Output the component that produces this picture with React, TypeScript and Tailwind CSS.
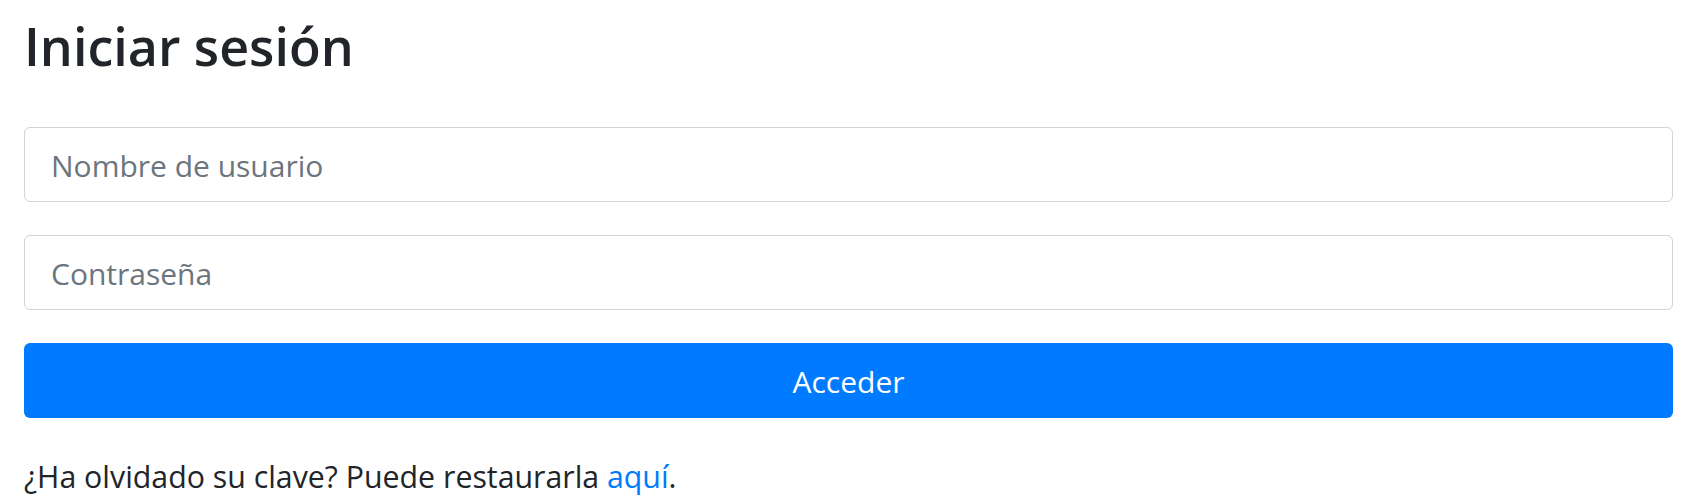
export default function App() {
  return (
    <div className="min-h-screen bg-white pl-[24px] pr-[14px] pt-[11px] font-['Open_Sans',sans-serif] text-[#212529]">
      <h1 className="text-[52px] leading-[70px] font-semibold mb-[46px]">Iniciar sesión</h1>

      <form className="flex flex-col gap-[33px]" onSubmit={(e) => e.preventDefault()}>
        <input
          type="text"
          placeholder="Nombre de usuario"
          className="h-[75px] w-full rounded-[6px] border border-[#ced4da] bg-white px-[26px] pt-[2px] text-[30px] outline-none placeholder:text-[#6c757d]"
        />
        <input
          type="password"
          placeholder="Contraseña"
          className="h-[75px] w-full rounded-[6px] border border-[#ced4da] bg-white px-[26px] pt-[2px] text-[30px] outline-none placeholder:text-[#6c757d]"
        />
        <button
          type="submit"
          className="h-[75px] w-full rounded-[6px] bg-[#007bff] pt-[2px] text-[30px] text-white"
        >
          Acceder
        </button>
      </form>

      <p className="mt-[36px] text-[30.3px] leading-[45px]">
        ¿Ha olvidado su clave? Puede restaurarla <a href="#" className="text-[#007bff]">aquí</a>.
      </p>
    </div>
  );
}
